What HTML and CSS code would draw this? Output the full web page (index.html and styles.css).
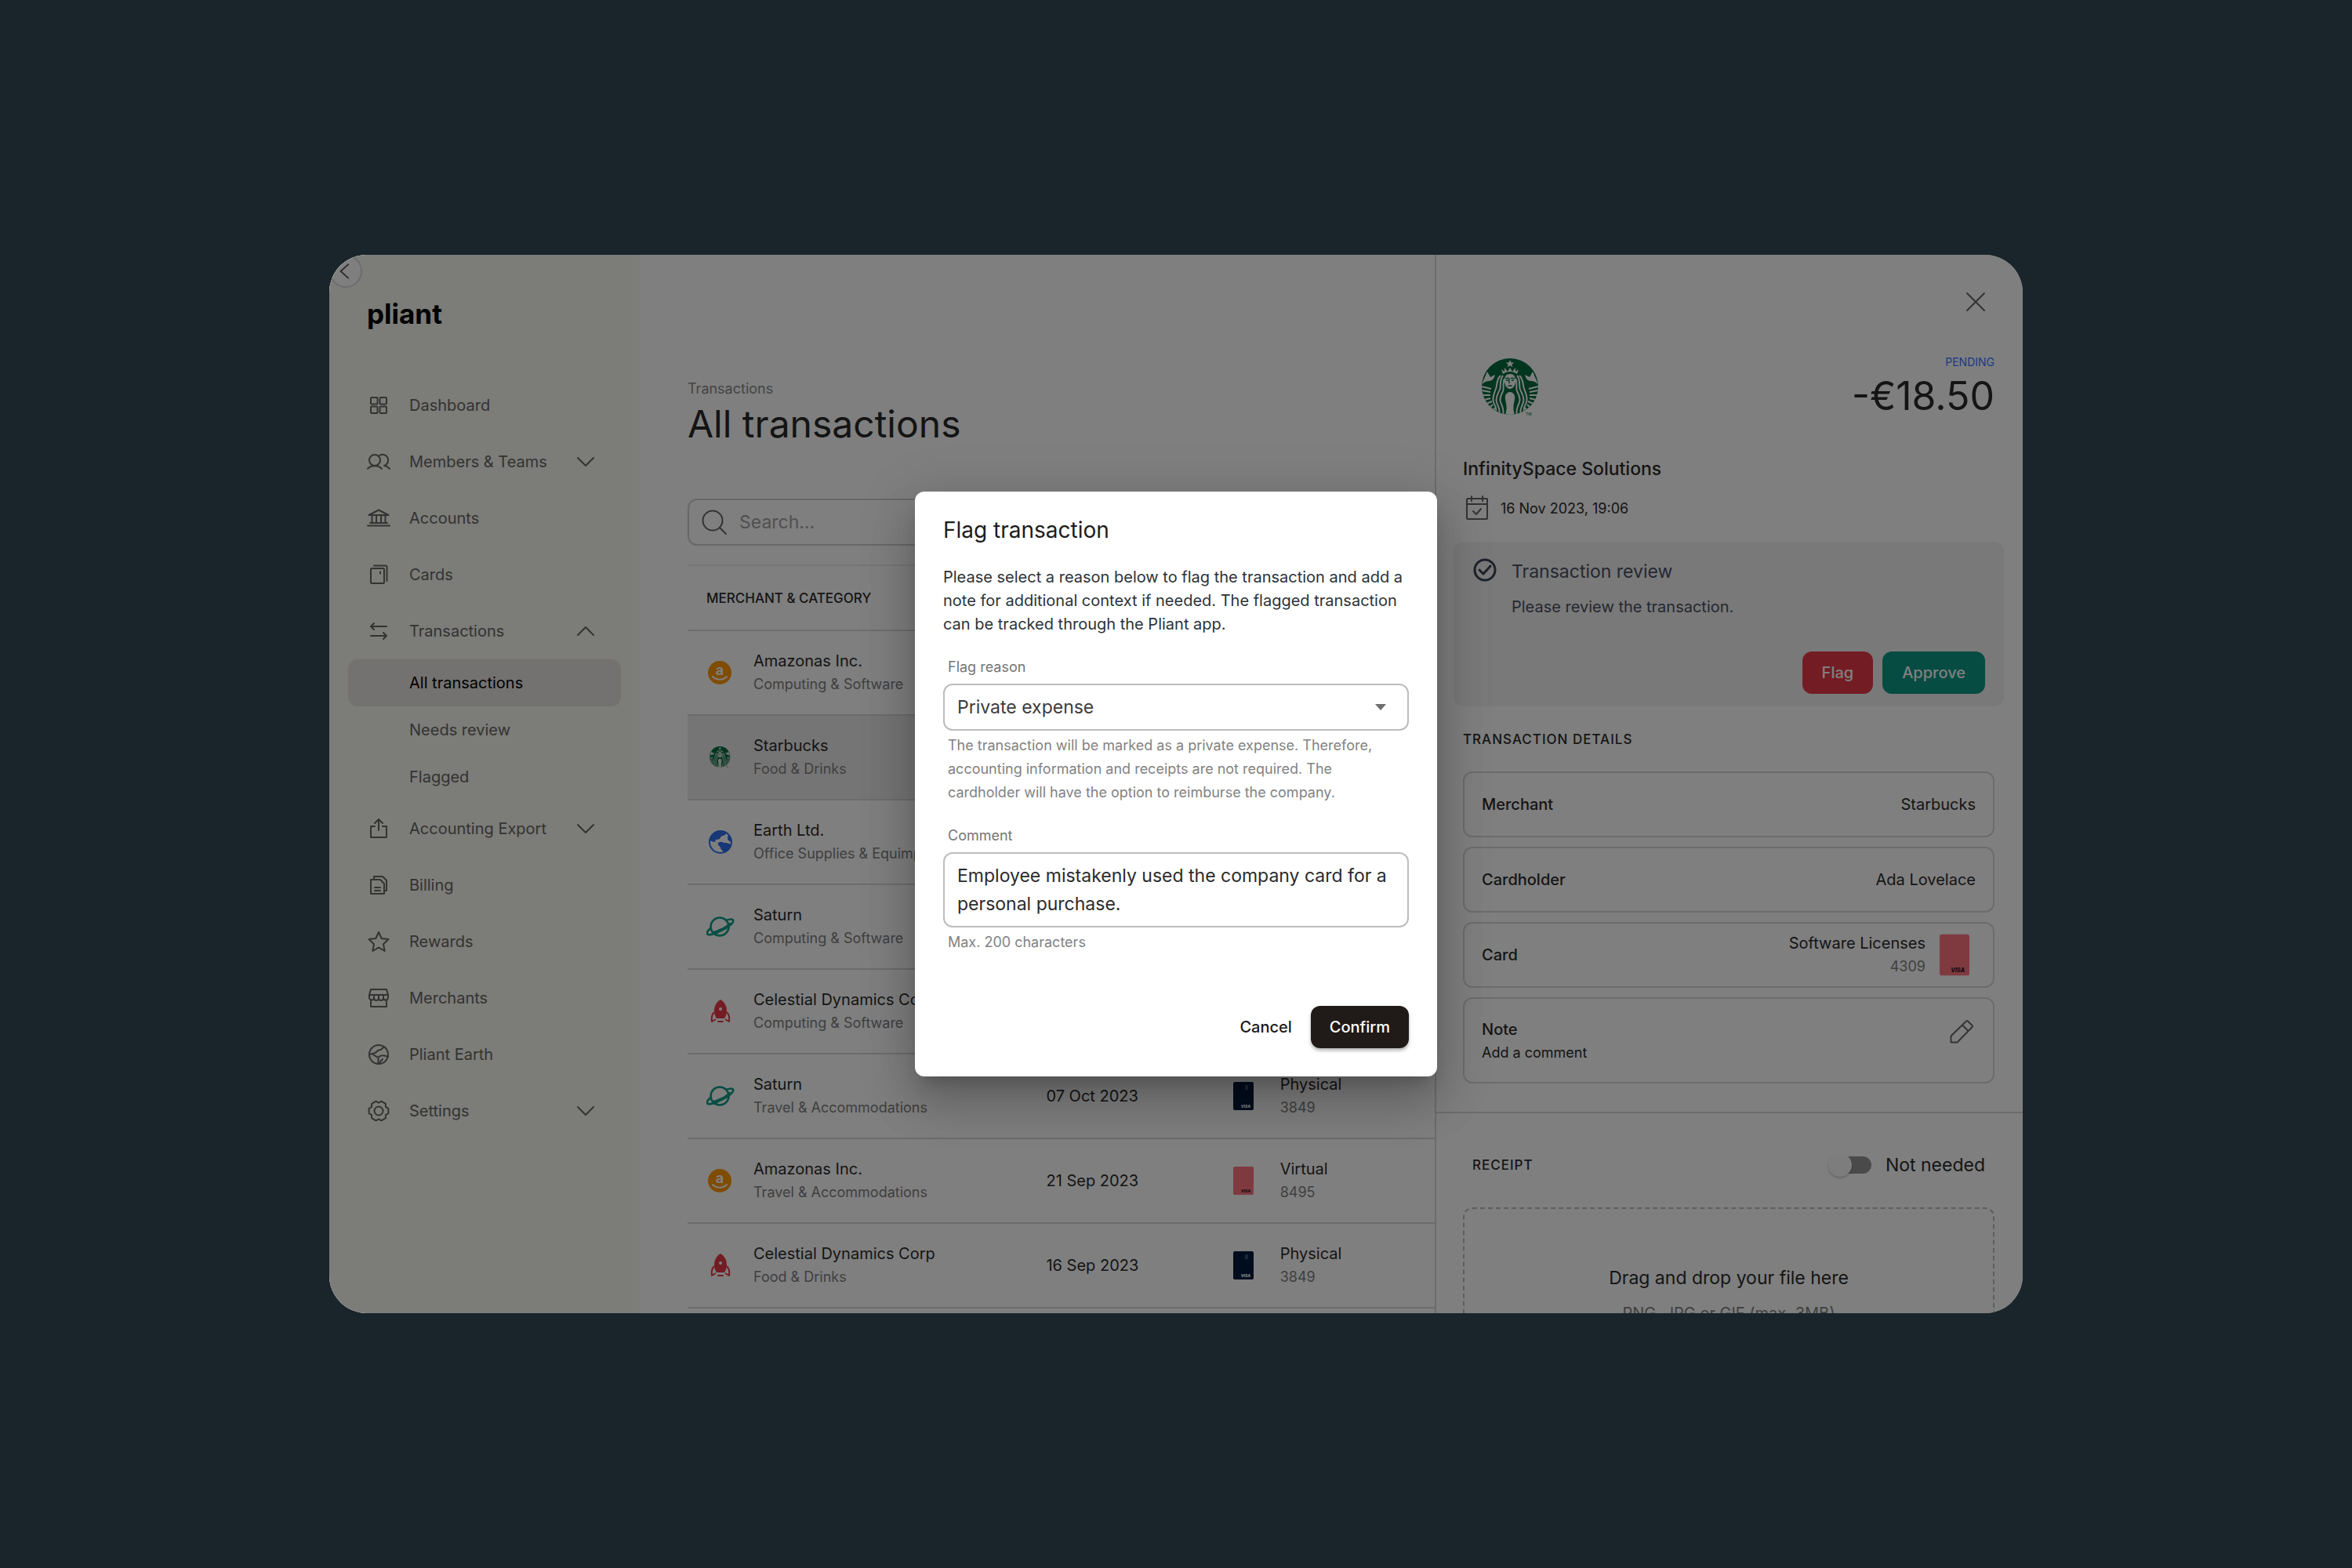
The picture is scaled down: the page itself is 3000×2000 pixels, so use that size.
FILE: index.html
```
<!DOCTYPE html>
<html lang="en">
<head>
    <meta charset="utf-8">
    <meta name="viewport" content="width=device-width, initial-scale=1">
    <title>Pliant - All transactions</title>
    <link rel="stylesheet" href="styles.css">
</head>
<body>
    <!-- shared icons -->
    <svg class="sprite" aria-hidden="true">
        <symbol id="chevron" viewBox="0 0 36 36"><path d="M8 13l10 10 10-10"/></symbol>

        <symbol id="amazonas" viewBox="0 0 36 36">
            <circle cx="17" cy="18" r="15" fill="#ff9900"/>
            <text x="17" y="21" text-anchor="middle" font-family="Inter, sans-serif" font-size="18" font-weight="700" fill="#fff">a</text>
            <path d="M8 23c5 5 13 5 18 0" fill="none" stroke="#fff" stroke-width="2" stroke-linecap="round"/>
        </symbol>

        <symbol id="earth" viewBox="0 0 36 36">
            <circle cx="18" cy="18" r="14" fill="none" stroke="#2f6fed" stroke-width="2"/>
            <path fill="#2f6fed" d="M4 16C5 9 11 4 18 4c3 0 6 1 8 2-1 2-2 3-5 4-2 0-3 2-4 4-2 1-4 0-6 2l1 2c-3 0-5-1-8-2z"/>
            <path fill="#2f6fed" d="M15 19c4-3 6 0 9 0 3 0 6 1 8 3-2 5-6 9-11 9 0-3-3-3-3-6-1-2-4-3-3-6zM28 8c3 3 4 6 4 10-3-1-5-2-5-5z"/>
        </symbol>

        <symbol id="saturn" viewBox="0 0 36 36">
            <g fill="none" stroke="#0e9c86" stroke-width="2.6" stroke-linejoin="round">
                <circle cx="17" cy="18" r="11.5"/>
                <path d="M25 10c5-2 9-2 9 0 1 3-6 9-15 13C11 27 2 30 1 27c-1-1 1-4 4-7"/>
                <path d="M30 13c-3 4-8 7-13 9-4 2-7 3-10 3" stroke-width="2"/>
            </g>
        </symbol>

        <symbol id="rocket" viewBox="0 0 36 36">
            <path fill="#e63946" d="M18 3c5 3 8 8 8 14 0 4-1 7-3 10H13c-2-3-3-6-3-10 0-6 3-11 8-14z"/>
            <circle cx="18" cy="15" r="2" fill="#fff"/>
            <path fill="none" stroke="#e63946" stroke-width="2" stroke-linejoin="round" d="M10 19c-3 3-4 6-3 12l5-3M26 19c3 3 4 6 3 12l-5-3"/>
            <path fill="none" stroke="#e63946" stroke-width="2" stroke-linecap="round" d="M15 31h6"/>
        </symbol>

        <symbol id="siren-half" viewBox="0 0 72 72" overflow="visible">
            <path fill="currentColor" d="M1 31L7 17l4 7 6-3c-1 5-4 8-8 8-3 0-6 1-8 4zM36 43c-4 0-7 4-6 9 1 6 3 11 0 20h6z"/>
            <path fill="currentColor" d="M36 12l-3 5-4-5v5l-4-3 2 6c3-2 6-3 9-3z"/>
            <g fill="none" stroke="currentColor" stroke-width="2">
                <path d="M27 22c-5 6-2 13-4 18s-6 9-4 16 5 9 3 15"/>
                <path d="M24 22c-6 6-4 12-6 17s-5 11-3 17 4 6 3 11"/>
                <path d="M29 26c-3 5 0 11-2 16s-5 8-3 14 5 9 3 16"/>
                <path d="M0 36l12 3M0 41l11 2M1 47l10 0M3 53l8-2M6 58l7-3M10 63l4-4M14 67l3-4" stroke-width="2"/>
            </g>
        </symbol>
        <symbol id="starbucks" viewBox="0 0 76 76">
            <clipPath id="disc"><circle cx="36" cy="36" r="36"/></clipPath>
            <g clip-path="url(#disc)">
                <rect width="72" height="72" fill="#006a3f"/>
                <use href="#siren-half" width="72" height="72"/>
                <use href="#siren-half" width="72" height="72" transform="translate(72 0) scale(-1 1)"/>
                <path fill="currentColor" d="M36 2l1.500 3.500h3.900l-3.100 2.400 1.200 3.700L36 9.300l-3.500 2.300 1.200-3.700-3.100-2.400h3.900z"/>
                <path fill="currentColor" d="M36 20c5 0 7 3 7 9 0 5-3 10-7 10s-7-5-7-10c0-6 2-9 7-9z"/>
                <g fill="none" stroke="#006a3f" stroke-width="1.300">
                    <path d="M30 26c2-1 4-1 5 0v6M42 26c-2-1-4-1-5 0M31 28h3M38 28h3M33.500 35h5"/>
                </g>
            </g>
            <text x="56" y="73" font-family="Inter, sans-serif" font-size="5" fill="#006a3f">TM</text>
        </symbol>

        <symbol id="card-navy" viewBox="0 0 26 36">
            <rect width="26" height="36" rx="2" fill="#001a3d"/>
            <rect x="15" y="4" width="4" height="6" rx="1" fill="#3c4d6c"/>
            <text x="22" y="33" text-anchor="end" font-family="Inter, sans-serif" font-size="5" font-weight="800" font-style="italic" fill="#fff">VISA</text>
        </symbol>
        <symbol id="card-red" viewBox="0 0 26 36">
            <rect width="26" height="36" rx="2" fill="#ff7480"/>
            <text x="22" y="33" text-anchor="end" font-family="Inter, sans-serif" font-size="5" font-weight="800" font-style="italic" fill="#2b1a1c">VISA</text>
        </symbol>
    </svg>

    <div class="app">
        <aside class="sidebar">
            <button class="collapse" aria-label="Collapse menu">
                <svg viewBox="0 0 24 24"><path d="M16 2L5 12l11 10"/></svg>
            </button>
            <div class="logo">pliant</div>
            <nav class="nav">
                <a href="#" class="nav-item">
                    <svg class="icon" viewBox="0 0 36 36"><rect x="8" y="8" width="8.500" height="8.500" rx="1"/><rect x="19.500" y="8" width="8.500" height="8.500" rx="1"/><rect x="8" y="19.500" width="8.500" height="8.500" rx="1"/><rect x="19.500" y="19.500" width="8.500" height="8.500" rx="1"/></svg>
                    <span>Dashboard</span>
                </a>
                <a href="#" class="nav-item">
                    <svg class="icon" viewBox="0 0 36 36"><circle cx="13" cy="16" r="7"/><path d="M4 27c4-5 14-5 18 0M19 10c5-3 11 0 11 6 0 3-2 6-5 7 3 0 5 2 7 4"/></svg>
                    <span>Members &amp; Teams</span>
                    <svg class="icon chev"><use href="#chevron"/></svg>
                </a>
                <a href="#" class="nav-item">
                    <svg class="icon" viewBox="0 0 36 36"><path d="M5.500 14L18 7.500 30.500 14zM9.500 14v9M15 14v9M21 14v9M26.500 14v9M7 24h22M4 27.500h28"/></svg>
                    <span>Accounts</span>
                </a>
                <a href="#" class="nav-item">
                    <svg class="icon" viewBox="0 0 36 36"><rect x="8" y="10" width="17" height="19" rx="1.500"/><path d="M12 6.500h15q1.500 0 1.500 1.500v18M20 14.500v2"/></svg>
                    <span>Cards</span>
                </a>
                <a href="#" class="nav-item">
                    <svg class="icon" viewBox="0 0 36 36"><path d="M28 12H8M12 8l-4 4 4 4M8 24h20M24 20l4 4-4 4"/></svg>
                    <span>Transactions</span>
                    <svg class="icon chev up"><use href="#chevron"/></svg>
                </a>
                <a href="#" class="nav-item sub active">All transactions</a>
                <a href="#" class="nav-item sub">Needs review</a>
                <a href="#" class="nav-item sub">Flagged</a>
                <a href="#" class="nav-item">
                    <svg class="icon" viewBox="0 0 36 36"><path d="M13 15H8v14h20V15h-5M18 20V6M13 11l5-5 5 5"/></svg>
                    <span>Accounting Export</span>
                    <svg class="icon chev"><use href="#chevron"/></svg>
                </a>
                <a href="#" class="nav-item">
                    <svg class="icon" viewBox="0 0 36 36"><path d="M8 11h12l5 5v13H8zM12 11V7h11l5 5v13h-3M13 21h7M13 25h7"/></svg>
                    <span>Billing</span>
                </a>
                <a href="#" class="nav-item">
                    <svg class="icon" viewBox="0 0 36 36"><path d="M18 6l3.600 8 8.900 1-6.500 6.200 1.700 8.800-7.700-4.300L10.300 30 12 21.200 5.500 15l8.900-1z"/></svg>
                    <span>Rewards</span>
                </a>
                <a href="#" class="nav-item">
                    <svg class="icon" viewBox="0 0 36 36"><path d="M8 7h20l2 7v3a3 3 0 0 1-6 1 3 3 0 0 1-6 0 3 3 0 0 1-6 0 3 3 0 0 1-6-1v-3zM6 14h24M8 20v9h20v-9M12 14v4M18 14v4M24 14v4"/></svg>
                    <span>Merchants</span>
                </a>
                <a href="#" class="nav-item">
                    <svg class="icon" viewBox="0 0 36 36"><circle cx="18" cy="18" r="12"/><path d="M24 8c-1 4-4 4-7 5-2 2-3 4-7 4 2 3 5 3 7 5 2 2-1 4 1 8M17 22c4-4 9-3 13-1M6 18l4-1M24 8l2 1M19 30l1-3 3-3"/></svg>
                    <span>Pliant Earth</span>
                </a>
                <a href="#" class="nav-item">
                    <svg class="icon" viewBox="0 0 36 36"><path d="M30.400 14.900v6.200l-3.500 2.100v4l-5.400 3.100-3.500-2-3.500 2-5.400-3.100v-4l-3.500-2.100v-6.200l3.500-2.100v-4l5.400-3.100 3.500 2 3.500-2 5.400 3.100v4z"/><circle cx="18" cy="18" r="5.500"/></svg>
                    <span>Settings</span>
                    <svg class="icon chev"><use href="#chevron"/></svg>
                </a>
            </nav>
        </aside>

        <main class="main">
            <div class="breadcrumb">Transactions</div>
            <h1>All transactions</h1>
            <div class="search">
                <svg class="icon" viewBox="0 0 36 36"><circle cx="16" cy="16" r="12.500"/><path d="M25 25l8 8"/></svg>
                <input type="text" placeholder="Search..." aria-label="Search">
            </div>
            <table class="transactions">
                <thead>
                    <tr><th class="col-merchant">Merchant &amp; Category</th><th class="col-date"></th><th></th></tr>
                </thead>
                <tbody>
                    <tr>
                        <td><div class="merchant"><svg class="brand"><use href="#amazonas"/></svg><div>Amazonas Inc.<small>Computing &amp; Software</small></div></div></td>
                        <td></td>
                        <td></td>
                    </tr>
                    <tr class="selected">
                        <td><div class="merchant"><svg class="brand siren"><use href="#starbucks"/></svg><div>Starbucks<small>Food &amp; Drinks</small></div></div></td>
                        <td></td>
                        <td></td>
                    </tr>
                    <tr>
                        <td><div class="merchant"><svg class="brand"><use href="#earth"/></svg><div>Earth Ltd.<small>Office Supplies &amp; Equimpent</small></div></div></td>
                        <td></td>
                        <td></td>
                    </tr>
                    <tr>
                        <td><div class="merchant"><svg class="brand"><use href="#saturn"/></svg><div>Saturn<small>Computing &amp; Software</small></div></div></td>
                        <td></td>
                        <td></td>
                    </tr>
                    <tr>
                        <td><div class="merchant"><svg class="brand"><use href="#rocket"/></svg><div>Celestial Dynamics Corp<small>Computing &amp; Software</small></div></div></td>
                        <td></td>
                        <td></td>
                    </tr>
                    <tr>
                        <td><div class="merchant"><svg class="brand"><use href="#saturn"/></svg><div>Saturn<small>Travel &amp; Accommodations</small></div></div></td>
                        <td>07 Oct 2023</td>
                        <td><div class="card"><svg class="plastic"><use href="#card-navy"/></svg><div>Physical<small>3849</small></div></div></td>
                    </tr>
                    <tr>
                        <td><div class="merchant"><svg class="brand"><use href="#amazonas"/></svg><div>Amazonas Inc.<small>Travel &amp; Accommodations</small></div></div></td>
                        <td>21 Sep 2023</td>
                        <td><div class="card"><svg class="plastic"><use href="#card-red"/></svg><div>Virtual<small>8495</small></div></div></td>
                    </tr>
                    <tr>
                        <td><div class="merchant"><svg class="brand"><use href="#rocket"/></svg><div>Celestial Dynamics Corp<small>Food &amp; Drinks</small></div></div></td>
                        <td>16 Sep 2023</td>
                        <td><div class="card"><svg class="plastic"><use href="#card-navy"/></svg><div>Physical<small>3849</small></div></div></td>
                    </tr>
                </tbody>
            </table>
        </main>

        <section class="detail">
            <div class="detail-top">
                <button class="close" aria-label="Close"><svg class="icon" viewBox="0 0 36 36"><path d="M7 7l22 22M29 7L7 29"/></svg></button>
                <div class="summary">
                    <svg class="summary-logo"><use href="#starbucks"/></svg>
                    <div class="summary-amount">
                        <div class="status">PENDING</div>
                        <div class="amount">-€18.50</div>
                    </div>
                </div>
                <h2 class="company">InfinitySpace Solutions</h2>
                <div class="date">
                    <svg class="icon" viewBox="0 0 36 36"><rect x="5" y="5" width="26" height="26" rx="1"/><path d="M5 12h26M11 2v6M25 2v6M13 21l4 4 6-7"/></svg>
                    <span>16 Nov 2023, 19:06</span>
                </div>

                <div class="review">
                    <svg class="review-icon" viewBox="0 0 32 32"><circle cx="16" cy="16" r="13"/><path d="M9 16l5 5 9-10"/></svg>
                    <div class="review-body">
                        <h3>Transaction review</h3>
                        <p>Please review the transaction.</p>
                        <div class="buttons">
                            <button class="btn flag">Flag</button>
                            <button class="btn approve">Approve</button>
                        </div>
                    </div>
                </div>

                <h4 class="overline">Transaction details</h4>
                <div class="boxes">
                    <div class="box"><b>Merchant</b><span>Starbucks</span></div>
                    <div class="box"><b>Cardholder</b><span>Ada Lovelace</span></div>
                    <div class="box card-box">
                        <b>Card</b>
                        <div class="card-name">Software Licenses<small>4309</small></div>
                        <svg class="plastic-large"><use href="#card-red"/></svg>
                    </div>
                    <div class="box note">
                        <div><b>Note</b><p>Add a comment</p></div>
                        <svg class="icon" viewBox="0 0 36 36"><path d="M4.500 31.500v-8L24 4.500q1-1 2 0l5.500 5.500q1 1 0 2l-19 19.500zM19 9.500l7.500 7.500"/></svg>
                    </div>
                </div>
            </div>

            <div class="receipt">
                <div class="receipt-head">
                    <h4 class="overline">Receipt</h4>
                    <label class="toggle"><input type="checkbox">Not needed</label>
                </div>
                <div class="dropzone">
                    <p>Drag and drop your file here</p>
                    <small>PNG, JPG or GIF (max. 3MB)</small>
                </div>
            </div>
        </section>

        <div class="overlay">
            <form class="modal" role="dialog" aria-labelledby="modal-title">
                <h2 id="modal-title">Flag transaction</h2>
                <p class="intro">Please select a reason below to flag the transaction and add a note for additional context if needed. The flagged transaction can be tracked through the Pliant app.</p>
                <label for="reason">Flag reason</label>
                <div class="select">
                    <select id="reason">
                        <option>Private expense</option>
                    </select>
                    <svg class="arrow" viewBox="0 0 14 8"><path d="M0 0h14L7 8z"/></svg>
                </div>
                <p class="helper">The transaction will be marked as a private expense. Therefore, accounting information and receipts are not required. The cardholder will have the option to reimburse the company.</p>
                <label for="comment">Comment</label>
                <textarea id="comment" maxlength="200">Employee mistakenly used the company card for a personal purchase.</textarea>
                <p class="helper">Max. 200 characters</p>
                <div class="buttons modal-buttons">
                    <button type="button" class="btn cancel">Cancel</button>
                    <button type="button" class="btn confirm">Confirm</button>
                </div>
            </form>
        </div>
    </div>
</body>
</html>
```
FILE: styles.css
```
*{
    box-sizing: border-box;
}
body{
    margin: 0;
    height: 100vh;
    display: flex;
    justify-content: center;
    align-items: center;
    background-color: #19252b;
    color: #2b2b2b;
    font-family: Inter, "Liberation Sans", sans-serif;
    font-size: 20px;
    line-height: 30px;
}
h1, h2, h3, h4, p{
    margin: 0;
    font-weight: 400;
}
b{
    font-weight: 500;
}
small{
    display: block;
    font-size: 18px;
    color: #808080;
}
button, input, select, textarea{
    font-family: inherit;
    color: inherit;
}
.sprite{
    position: absolute;
    width: 0;
    height: 0;
}
.icon{
    flex: none;
    width: 36px;
    height: 36px;
    fill: none;
    stroke: #666;
    stroke-width: 2;
    stroke-linecap: round;
    stroke-linejoin: round;
}
.app{
    position: relative;
    display: flex;
    width: 72%;
    height: 67.5vh;
    border-radius: 48px;
    background-color: white;
    overflow: hidden;
}

/* sidebar */
.sidebar{
    position: relative;
    flex: none;
    width: 396px;
    padding: 54px 24px 0;
    background-color: #f8f9f0;
}
.collapse{
    position: absolute;
    top: 0;
    left: 0;
    width: 42px;
    height: 42px;
    padding: 8px;
    border: 2px solid #d8d8dc;
    border-radius: 50%;
    background-color: white;
}
.collapse svg{
    display: block;
    width: 22px;
    height: 22px;
    fill: none;
    stroke: #555;
    stroke-width: 2;
}
.logo{
    padding-left: 24px;
    font-size: 35px;
    line-height: 42px;
    font-weight: 700;
    color: black;
}
.nav{
    margin-top: 60px;
}
.nav-item{
    display: flex;
    align-items: center;
    gap: 21px;
    height: 72px;
    padding: 0 27px 0 21px;
    border-radius: 12px;
    color: #666;
    text-decoration: none;
}
.nav-item.sub{
    height: 60px;
    padding-left: 78px;
}
.nav-item.active{
    background-color: #e6e4e2;
    color: black;
}
.chev{
    margin-left: auto;
}
.up{
    transform: rotate(180deg);
}

/* transactions list */
.main{
    flex: 1;
    min-width: 0;
    padding: 159px 0 0 61px;
}
.breadcrumb{
    font-size: 18px;
    line-height: 24px;
    color: #888;
}
h1{
    font-size: 48px;
    line-height: 66px;
    color: #282828;
}
.search{
    display: flex;
    align-items: center;
    gap: 12px;
    width: 600px;
    height: 60px;
    margin-top: 62px;
    padding: 0 14px;
    border: 2px solid #d0d0d0;
    border-radius: 12px;
}
.search input{
    flex: 1;
    border: none;
    outline: none;
    background: none;
    font-size: 23px;
}
.search input::placeholder{
    color: #a0a0a0;
}
.transactions{
    width: 100%;
    margin-top: 24px;
    table-layout: fixed;
    border-collapse: separate;
    border-spacing: 0;
}
.transactions th{
    height: 85px;
    padding: 0;
    border-top: 2px solid #ececec;
    border-bottom: 2px solid #d8d8d8;
    font-size: 17px;
    font-weight: 500;
    text-align: left;
    text-transform: uppercase;
}
.transactions .col-merchant{
    width: 48%;
    padding-left: 24px;
}
.col-date{
    width: 25%;
}
.transactions td{
    height: 108px;
    padding: 0;
    border-bottom: 2px solid #d8d8d8;
}
.selected td{
    background-color: #ebebeb;
}
.merchant{
    display: flex;
    align-items: center;
    gap: 24px;
    padding-left: 24px;
    white-space: nowrap;
}
.brand{
    flex: none;
    width: 36px;
    height: 36px;
}
.siren{
    padding: 4px;
    color: #ebebeb;
}
.card{
    display: flex;
    align-items: center;
    gap: 34px;
}
.plastic{
    width: 26px;
    height: 36px;
}

/* detail panel */
.detail{
    flex: none;
    width: 750px;
    border-left: 2px solid #d8d8d8;
}
.detail-top{
    padding: 36px 36px 36px 34px;
    border-bottom: 2px solid #d8d8d8;
}
.close{
    display: block;
    width: 48px;
    height: 48px;
    margin-left: auto;
    padding: 6px;
    border: none;
    background: none;
}
.summary{
    display: flex;
    justify-content: space-between;
    align-items: center;
    margin-top: 42px;
    padding-left: 24px;
}
.summary-logo{
    width: 76px;
    height: 76px;
    color: white;
}
.summary-amount{
    text-align: right;
}
.status{
    font-size: 14px;
    line-height: 21px;
    color: #3a76ff;
}
.amount{
    font-size: 50px;
    line-height: 66px;
}
.company{
    margin-top: 42px;
    font-size: 23px;
    line-height: 36px;
    font-weight: 500;
}
.date{
    display: flex;
    align-items: center;
    gap: 12px;
    margin-top: 15px;
    font-size: 18px;
}
.review{
    display: flex;
    gap: 18px;
    margin: 24px -12px 0;
    padding: 20px 24px 16px;
    border-radius: 12px;
    background-color: #f2f2f3;
    color: #4a5162;
}
.review-icon{
    flex: none;
    width: 32px;
    height: 32px;
    fill: none;
    stroke: #3c4354;
    stroke-width: 3;
    stroke-linecap: round;
    stroke-linejoin: round;
}
.review-body{
    flex: 1;
}
.review h3{
    font-size: 23px;
    line-height: 36px;
}
.review p{
    margin-top: 12px;
}
.buttons{
    display: flex;
    justify-content: flex-end;
    gap: 12px;
    margin-top: 42px;
}
.btn{
    height: 54px;
    padding: 0 24px;
    border: none;
    border-radius: 12px;
    font-size: 20px;
    font-weight: 500;
    color: white;
    cursor: pointer;
}
.flag, .approve{
    padding: 0 25px;
}
.flag{
    background-color: #e63948;
}
.approve{
    background-color: #0e9886;
}
.overline{
    font-size: 17px;
    line-height: 24px;
    font-weight: 500;
    letter-spacing: 1px;
    text-transform: uppercase;
}
.detail-top .overline{
    margin-top: 30px;
}
.boxes{
    display: flex;
    flex-direction: column;
    gap: 12px;
    margin-top: 29px;
}
.box{
    display: flex;
    justify-content: space-between;
    align-items: center;
    height: 84px;
    padding: 0 22px;
    border: 2px solid #d8d8d8;
    border-radius: 12px;
}
.card-box{
    gap: 18px;
    padding-right: 30px;
}
.card-name{
    margin-left: auto;
    text-align: right;
}
.plastic-large{
    width: 38px;
    height: 54px;
}
.note{
    align-items: flex-start;
    height: 110px;
    padding-top: 24px;
}
.note p{
    font-size: 18px;
}
.receipt{
    padding: 42px 36px 0 34px;
}
.receipt-head{
    display: flex;
    justify-content: space-between;
    align-items: center;
    height: 48px;
    padding: 0 12px;
}
.toggle{
    display: flex;
    align-items: center;
    gap: 18px;
    font-size: 23px;
}
.toggle input{
    position: relative;
    appearance: none;
    width: 51px;
    height: 22px;
    margin: 0;
    border-radius: 11px;
    background-color: #949494;
}
/* thumb of the switch */
.toggle input::before{
    content: "";
    position: absolute;
    top: -4px;
    left: -4px;
    width: 30px;
    height: 30px;
    border-radius: 50%;
    background-color: #fafafa;
    box-shadow: 0 2px 3px rgba(0, 0, 0, 0.2);
}
.dropzone{
    margin-top: 30px;
    padding: 70px 24px;
    border: 2px dashed #bdbdbd;
    border-radius: 12px;
    text-align: center;
}
.dropzone p{
    font-size: 23px;
    line-height: 36px;
}
.dropzone small{
    margin-top: 12px;
    font-size: 20px;
}

/* modal */
.overlay{
    position: absolute;
    inset: 0;
    display: flex;
    justify-content: center;
    align-items: center;
    background-color: rgba(0, 0, 0, 0.5);
}
.modal{
    width: 666px;
    padding: 34px 36px 36px;
    border-radius: 12px;
    background-color: white;
    box-shadow: 0 16px 22px -10px rgba(0, 0, 0, 0.2), 0 36px 57px 4px rgba(0, 0, 0, 0.14), 0 14px 69px 12px rgba(0, 0, 0, 0.12);
}
.modal h2{
    font-size: 28px;
    font-weight: 400;
    color: #1c1c1c;
}
.intro{
    margin-top: 30px;
    color: #2c3338;
}
.modal label{
    display: block;
    margin: 28px 6px 9px;
    font-size: 18px;
    line-height: 24px;
    color: #757575;
}
.select{
    position: relative;
}
.select select, .modal textarea{
    display: block;
    width: 100%;
    border: 2px solid #bdbdbd;
    border-radius: 12px;
    background-color: white;
    font-size: 23px;
}
.select select{
    appearance: none;
    height: 60px;
    padding: 0 16px;
    color: #3c3c3c;
}
.arrow{
    position: absolute;
    top: 26px;
    right: 29px;
    width: 14px;
    height: 8px;
    fill: #6e6e6e;
}
.modal textarea{
    height: 96px;
    padding: 10px 16px;
    line-height: 36px;
    resize: none;
    overflow: hidden;
}
.helper{
    margin: 4px 6px 0;
    font-size: 18px;
    color: #828282;
}
.modal-buttons{
    margin-top: 66px;
}
.cancel{
    padding: 0 12px;
    background: none;
    color: #1a1a1a;
}
.confirm{
    background-color: #201a18;
    box-shadow: 0 3px 4px rgba(0, 0, 0, 0.3);
}
```
